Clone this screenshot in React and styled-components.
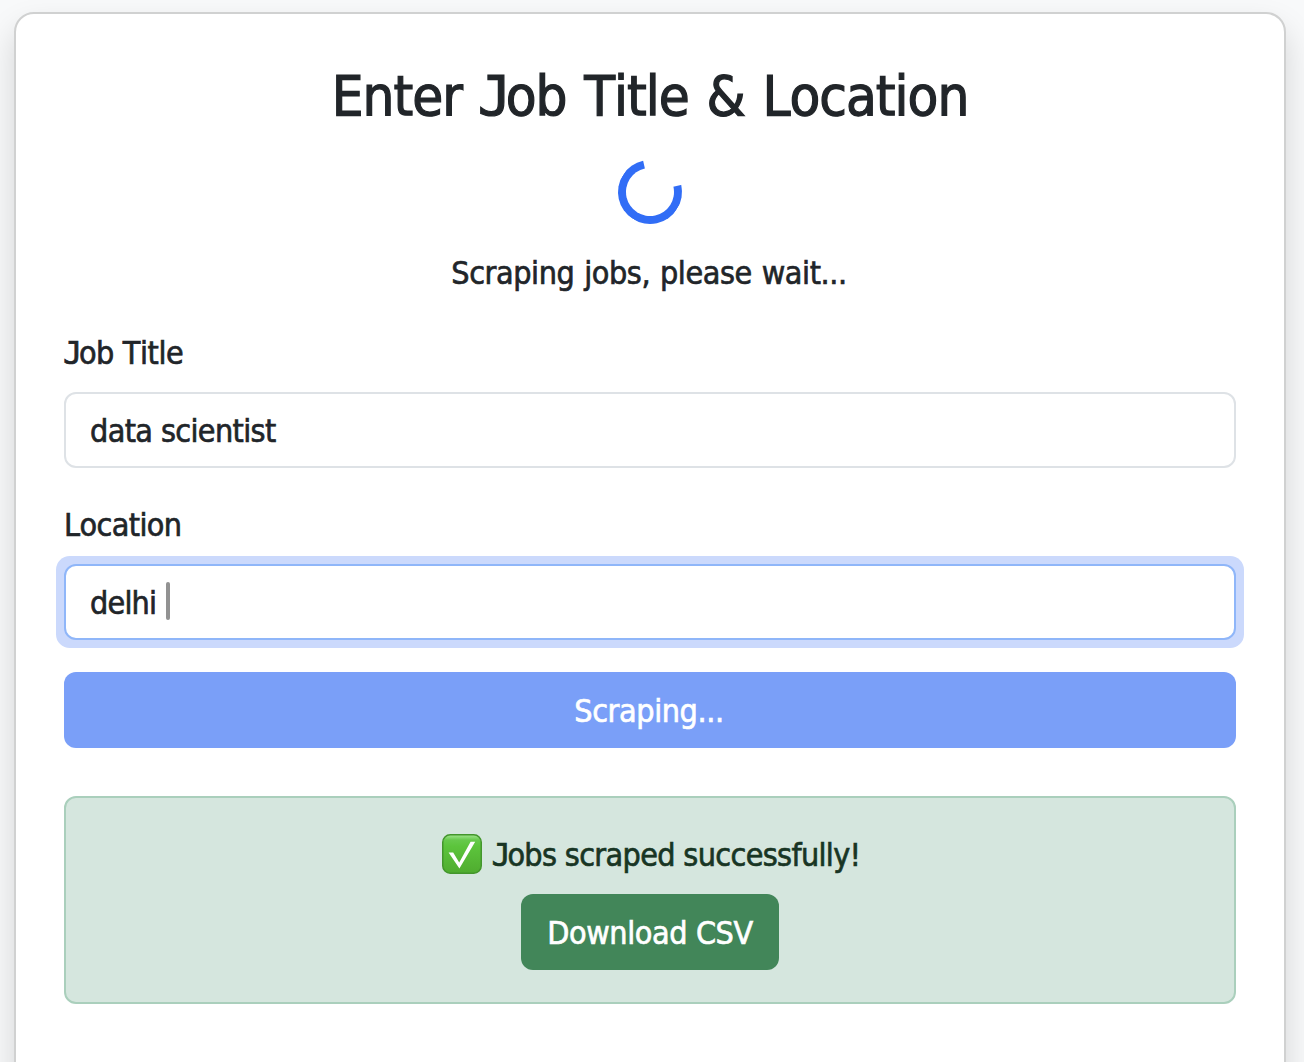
import React from "react";
import styled, { createGlobalStyle, css } from "styled-components";

const GlobalStyle = createGlobalStyle`
  * { box-sizing: border-box; }
  body {
    margin: 0;
    overflow: hidden;
    background: #f8f9fa;
    color: #212529;
    font-family: "DejaVu Sans Condensed", "DejaVu Sans", Tahoma, sans-serif;
    font-stretch: condensed;
    font-size: 32px;
    line-height: 48px;
    font-kerning: none;
  }
`;

const Page = styled.main`
  height: 1062px;
  padding: 12px 18px 0 14px;
  overflow: hidden;
`;

const Card = styled.section`
  display: flex;
  flex-direction: column;
  height: 1130px;
  padding: 48px;
  background: #fff;
  background-clip: padding-box;
  border: 2px solid #d0d1d1;
  border-radius: 20px;
  box-shadow: 0 16px 32px rgba(0, 0, 0, 0.15);
`;

const Text = styled.span`
  display: block;
  padding-top: ${(p) => p.$drop ?? 1}px;
  padding-right: ${(p) => p.$trail || 0}px;
  letter-spacing: ${(p) => p.$tracking || 0}px;
  word-spacing: ${(p) => p.$words || 0}px;
  white-space: nowrap;
  -webkit-text-stroke: ${(p) => p.$stroke ?? 0.65}px currentColor;
`;

const Tight = styled.span`
  word-spacing: 1px;
`;

const SerifJ = styled.span`
  margin-left: ${(p) => p.$lead || 0}px;
  font-family: "DejaVu Sans Mono", monospace;
  letter-spacing: -0.105em;
  line-height: 0;
`;

const Title = styled.h2`
  height: 67px;
  margin: 0 0 31px;
  font-size: 56px;
  font-weight: 400;
  line-height: 67px;
  text-align: center;
`;

const Status = styled.div`
  display: flex;
  flex-direction: column;
  align-items: center;
  gap: 24px;
  height: 136px;
  margin-bottom: 32px;
`;

const Spinner = styled.div`
  flex: none;
  width: 64px;
  height: 64px;
  border: 8px solid #316df6;
  border-right-color: transparent;
  border-radius: 50%;
  transform: rotate(-57.5deg);
`;

const Field = styled.div`
  display: flex;
  flex-direction: column;
  gap: 16px;
  margin-bottom: 32px;
`;

const Label = styled.label`
  height: 48px;
`;

const InputWrap = styled.div`
  position: relative;
  display: flex;
  border-radius: 6px;
  ${(p) =>
    p.$active &&
    css`
      background: #cbd9fc;
      box-shadow: 0 0 0 8px #cbd9fc;
    `}
`;

const Input = styled.input`
  width: 100%;
  height: 76px;
  padding: 13px 24px 11px;
  color: inherit;
  background: #fff;
  border: 2px solid ${(p) => (p.$active ? "#8fb6f9" : "#dee2e6")};
  border-radius: 12px;
  outline: none;
  font: inherit;
  font-kerning: none;
  letter-spacing: ${(p) => p.$tracking || 0}px;
  -webkit-text-stroke: 0.65px currentColor;
`;

const Caret = styled.i`
  position: absolute;
  left: 102px;
  top: 18px;
  width: 4px;
  height: 38px;
  border-radius: 2px;
  background: #929292;
`;

const Button = styled.button`
  height: 76px;
  padding: 0 26px;
  border: 0;
  border-radius: 12px;
  color: #fff;
  background: ${(p) => (p.$success ? "#428659" : "#7a9ff8")};
  font: inherit;
  font-kerning: none;
  width: ${(p) => p.$width || "100%"};
`;

const Alert = styled.div`
  display: flex;
  flex-direction: column;
  align-items: center;
  gap: 16px;
  margin-top: 48px;
  padding: 32px;
  color: #183524;
  background: #d5e6de;
  border: 2px solid #aacfbc;
  border-radius: 12px;
`;

const Message = styled.div`
  display: flex;
  align-items: center;
  gap: 9px;
  height: 48px;
  padding-left: 2px;
`;

function CheckMark() {
  return (
    <svg width="40" height="40" viewBox="0 0 40 40" aria-hidden="true">
      <defs>
        <linearGradient id="face" x1="0" y1="0" x2="0" y2="1">
          <stop offset="0" stopColor="#a2e58e" />
          <stop offset="0.14" stopColor="#66c94b" />
          <stop offset="0.3" stopColor="#5cc43c" />
          <stop offset="1" stopColor="#4fac2f" />
        </linearGradient>
      </defs>
      <rect x="0.75" y="0.75" width="38.5" height="38.5" rx="7.5" fill="url(#face)" stroke="#43962c" strokeWidth="1.5" />
      <path d="M6.6 18.6H11.2L17.2 28.4L28.6 7.8H33.2L17.4 34.4Z" fill="#fff" />
    </svg>
  );
}

export default function App() {
  return (
    <>
      <GlobalStyle />
      <Page>
        <Card>
          <Title>
            <Text $drop={0} $stroke={1.2} $tracking={-1} $words={2.7}>
              <Tight>Enter </Tight><SerifJ>J</SerifJ>ob Title &amp; Location
            </Text>
          </Title>
          <Status>
            <Spinner />
            <Text $tracking={-0.4} $words={1} $trail={2}>Scraping jobs, please wait...</Text>
          </Status>
          <Field>
            <Label htmlFor="title">
              <Text $tracking={-0.4}><SerifJ $lead={-1}>J</SerifJ>ob Title</Text>
            </Label>
            <InputWrap>
              <Input id="title" $tracking={-0.62} defaultValue="data scientist" />
            </InputWrap>
          </Field>
          <Field>
            <Label htmlFor="location"><Text $tracking={-0.6}>Location</Text></Label>
            <InputWrap $active>
              <Input id="location" $active $tracking={-0.8} defaultValue="delhi " />
              <Caret />
            </InputWrap>
          </Field>
          <Button><Text $tracking={-0.4} $trail={2}>Scraping...</Text></Button>
          <Alert>
            <Message>
              <CheckMark />
              <Text $tracking={-0.65}><SerifJ $lead={1}>J</SerifJ>obs scraped successfully!</Text>
            </Message>
            <Button $success $width="258px"><Text $tracking={-0.4}>Download CSV</Text></Button>
          </Alert>
        </Card>
      </Page>
    </>
  );
}
